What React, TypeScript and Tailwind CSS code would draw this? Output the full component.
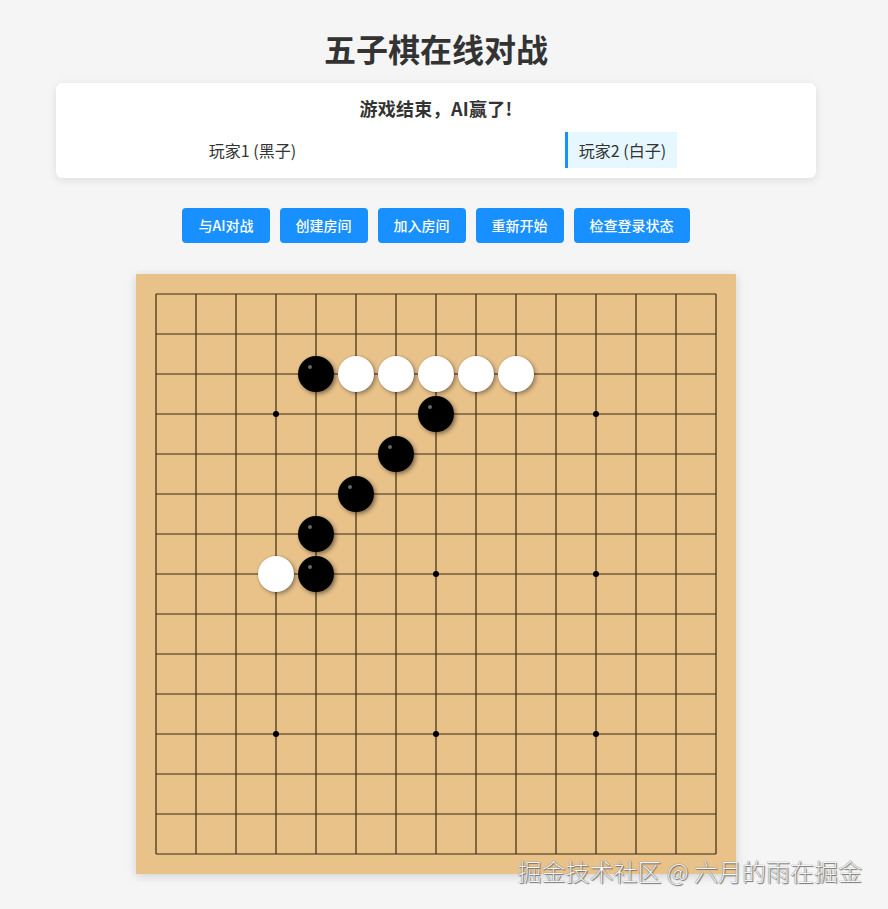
import React from 'react';

// board geometry: 15x15 lines, 40px apart, 20px margin
const CELL = 40;
const PAD = 20;
const SIZE = 15;

type Stone = { r: number; c: number; color: 'black' | 'white' };

const stones: Stone[] = [
  { r: 2, c: 4, color: 'black' },
  { r: 2, c: 5, color: 'white' },
  { r: 2, c: 6, color: 'white' },
  { r: 2, c: 7, color: 'white' },
  { r: 2, c: 8, color: 'white' },
  { r: 2, c: 9, color: 'white' },
  { r: 3, c: 7, color: 'black' },
  { r: 4, c: 6, color: 'black' },
  { r: 5, c: 5, color: 'black' },
  { r: 6, c: 4, color: 'black' },
  { r: 7, c: 3, color: 'white' },
  { r: 7, c: 4, color: 'black' },
];

const starPoints = [3, 7, 11].flatMap((r) => [3, 7, 11].map((c) => ({ r, c })));

const buttons = ['与AI对战', '创建房间', '加入房间', '重新开始', '检查登录状态'];

function Board() {
  const end = PAD + CELL * (SIZE - 1);
  return (
    <div className="relative w-[600px] h-[600px] bg-[#e9c28a] shadow-[0_2px_10px_rgba(0,0,0,0.15)]">
      <svg width="600" height="600" className="block">
        {Array.from({ length: SIZE }).map((_, i) => (
          <g key={i}>
            <line x1={PAD} y1={PAD + i * CELL} x2={end} y2={PAD + i * CELL} stroke="#3a2a10" strokeWidth="1.2" />
            <line x1={PAD + i * CELL} y1={PAD} x2={PAD + i * CELL} y2={end} stroke="#3a2a10" strokeWidth="1.2" />
          </g>
        ))}
        {starPoints.map((p) => (
          <circle key={`${p.r}-${p.c}`} cx={PAD + p.c * CELL} cy={PAD + p.r * CELL} r="3" fill="#000" />
        ))}
      </svg>

      {/* Stones */}
      {stones.map((s) => (
        <div
          key={`${s.r}-${s.c}`}
          className={
            s.color === 'black'
              ? 'absolute w-[36px] h-[36px] rounded-full bg-black shadow-[2px_2px_4px_rgba(0,0,0,0.45)]'
              : 'absolute w-[36px] h-[36px] rounded-full bg-white shadow-[2px_2px_4px_rgba(0,0,0,0.35),0_0_0_1px_rgba(0,0,0,0.08)]'
          }
          style={{ left: PAD + s.c * CELL - 18, top: PAD + s.r * CELL - 18 }}
        >
          {s.color === 'black' && (
            <div className="absolute left-[10px] top-[9px] w-[4px] h-[4px] rounded-full bg-[#666]" />
          )}
        </div>
      ))}
    </div>
  );
}

export default function App() {
  return (
    <div
      className="relative min-h-screen bg-[#f5f5f5] text-[#333]"
      style={{ fontFamily: '"Noto Sans CJK SC", "Noto Sans", sans-serif' }}
    >
      <div className="w-[872px] flex flex-col items-center pt-[28px] pb-[35px]">
        {/* Title */}
        <h1 className="text-[32px] leading-[40px] font-bold text-[#333]">五子棋在线对战</h1>

        {/* Game Info */}
        <div className="mt-[15px] w-[760px] bg-white rounded-[6px] shadow-[0_2px_8px_rgba(0,0,0,0.1)] px-[10px] pt-[12px] pb-[10px]">
          <div className="text-center text-[18px] leading-[26px] font-bold tracking-[0.3px]">游戏结束，AI赢了!</div>
          <div className="mt-[11px] flex justify-around">
            <div className="h-[36px] flex items-center px-[11px] border-l-[3px] border-transparent text-[16px]">
              玩家1 (黑子)
            </div>
            <div className="h-[36px] flex items-center px-[11px] border-l-[3px] border-[#1890ff] bg-[#e6f7ff] text-[16px]">
              玩家2 (白子)
            </div>
          </div>
        </div>

        {/* Controls */}
        <div className="mt-[30px] flex gap-[10px]">
          {buttons.map((b) => (
            <button
              key={b}
              className="h-[35px] px-[16px] rounded-[4px] bg-[#1890ff] text-white text-[14px] font-medium"
            >
              {b}
            </button>
          ))}
        </div>

        {/* Board */}
        <div className="mt-[31px]">
          <Board />
        </div>
      </div>

      {/* Watermark */}
      <div className="absolute right-[26px] top-[855px] text-[24px] leading-[32px] font-light text-[#f4f4f4] [text-shadow:0_0_1px_#444,1px_1px_1px_#777]">
        掘金技术社区 @ 六月的雨在掘金
      </div>
    </div>
  );
}
